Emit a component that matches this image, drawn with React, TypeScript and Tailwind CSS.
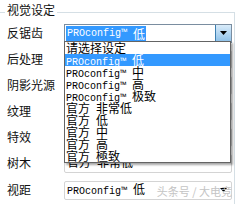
import React from 'react';

const CJK = /[\u3000-\u9fff\uff00-\uffef]+|[^\u3000-\u9fff\uff00-\uffef]+/g;

// SimSun-like look: half-width latin 6px, full-width CJK 12px
const MixText: React.FC<{ text: string }> = ({ text }) => (
  <>
    {(text.match(CJK) || []).map((run, i) =>
      /[\u3000-\u9fff]/.test(run) ? (
        <span key={i} className="font-['Noto_Sans_CJK_SC',sans-serif] text-[12px]">
          {run}
        </span>
      ) : (
        <span key={i} className="whitespace-pre font-['Liberation_Mono',monospace] text-[10px]">
          {run}
        </span>
      )
    )}
  </>
);

// combos of rows 2-5 sit under the open list, so their text is never seen
const ROWS = [
  { label: '反锯齿', value: 'PROconfig™ 低' },
  { label: '后处理', value: '' },
  { label: '阴影光源', value: '' },
  { label: '纹理', value: '' },
  { label: '特效', value: '' },
  { label: '树木', value: '官方 非常低' },
];

const OPTIONS = [
  '请选择设定',
  'PROconfig™ 低',
  'PROconfig™ 中',
  'PROconfig™ 高',
  'PROconfig™ 极致',
  '官方 非常低',
  '官方 低',
  '官方 中',
  '官方 高',
  '官方 極致',
];

const Arrow: React.FC = () => (
  <svg width="7" height="4" viewBox="0 0 7 4">
    <path d="M0 0h7L3.5 4z" fill="#000" />
  </svg>
);

const ActiveCombo: React.FC<{ value: string }> = ({ value }) => (
  <div className="flex h-[19px] w-[168px] items-center border border-[#7a8da0] bg-white">
    <div className="ml-[1px] flex h-[15px] items-center bg-[#3399ff] pr-[1px] pl-[1px] leading-[15px] text-white">
      <MixText text={value} />
    </div>
    <div className="ml-auto flex h-full w-[16px] items-center justify-center border-l border-[#3c7fb1] bg-gradient-to-b from-[#d9ecfa] to-[#8cc0e8]">
      <Arrow />
    </div>
  </div>
);

const PlainCombo: React.FC<{ value: string; arrow?: boolean }> = ({ value, arrow }) => (
  <div className="flex h-[19px] w-[168px] items-center rounded-[2px] border border-[#d4d4d4] bg-white">
    <div className="pl-[2px] leading-[15px] text-black">
      <MixText text={value} />
    </div>
    {arrow && (
      <div className="mr-[4px] ml-auto flex items-center">
        <Arrow />
      </div>
    )}
  </div>
);

export default function App() {
  return (
    <div className="relative h-[204px] w-[237px] overflow-hidden bg-white font-['Noto_Sans_CJK_SC',sans-serif] text-[12px] text-[#111]">
      <div className="mt-[12px] mr-[2px] h-[192px] border-t border-r border-[#d5dfe5]">
        <div className="-mt-[12px] ml-[5px] w-fit bg-white px-[2px] leading-[18px]">视觉设定</div>

        <div className="mt-[1px] flex flex-col">
          {ROWS.map((row, i) => (
            <div key={i} className="flex h-[26px] items-center pl-[7px]">
              <div className="w-[57px] leading-[14px]">{row.label}</div>
              {i === 0 ? <ActiveCombo value={row.value} /> : <PlainCombo value={row.value} />}
            </div>
          ))}
          <div className="mt-[1px] flex h-[26px] items-center pl-[7px]">
            <div className="w-[57px] leading-[14px]">视距</div>
            <PlainCombo value="PROconfig™ 低" arrow />
          </div>
        </div>
      </div>

      {/* open dropdown list */}
      <div className="absolute top-[41px] left-[64px] w-[167px] border border-[#646464] bg-white shadow-[2px_2px_2px_rgba(0,0,0,0.35)]">
        {OPTIONS.map((opt, i) => (
          <div
            key={i}
            className={
              'h-[12px] overflow-visible pl-[1px] leading-[12px] ' +
              (i === 1 ? 'bg-[#3399ff] text-white' : 'text-black')
            }
          >
            <MixText text={opt} />
          </div>
        ))}
      </div>

      {/* watermark */}
      <div className="absolute right-[5px] bottom-[6px] text-[11px] leading-[14px] text-[#c4c4c4]">
        头条号 / 大电竞
      </div>
    </div>
  );
}
